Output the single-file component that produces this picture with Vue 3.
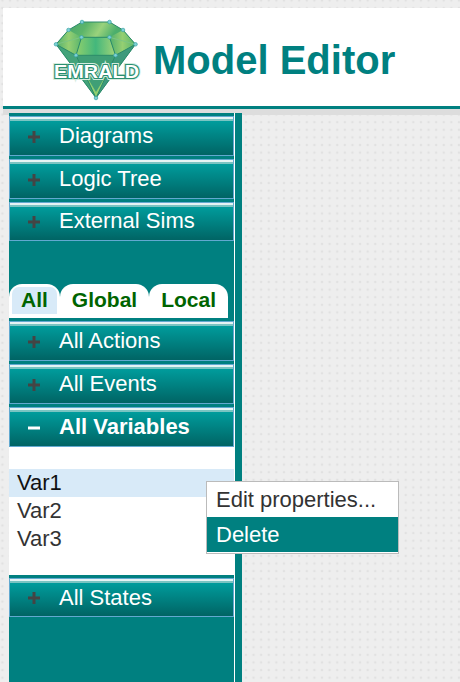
<script setup>
import { ref } from 'vue'

const diagrams = ['Diagrams', 'Logic Tree', 'External Sims']
const tabs = ['All', 'Global', 'Local']
const activeTab = ref('All')
const sections = [
  { label: 'All Actions' },
  { label: 'All Events' },
  { label: 'All Variables', items: ['Var1', 'Var2', 'Var3'] },
  { label: 'All States' },
]
const nodes = [[42, 6], [69.5, 6], [28.5, 14], [83, 14], [16, 28.3], [41.5, 21.3], [69.5, 21.3], [95.5, 28.3], [36, 39.3], [75.5, 39.3], [56, 82]]
</script>

<template>
  <div class="page">
    <header class="header">
      <svg class="logo" viewBox="0 0 110 86" width="110" height="86">
        <defs>
          <linearGradient id="crown" x1="0" x2="1" y1="0" y2="0.6">
            <stop offset="0" stop-color="#3f9f70" />
            <stop offset="0.3" stop-color="#5cb56a" />
            <stop offset="0.45" stop-color="#9ad27c" />
            <stop offset="0.6" stop-color="#4caf6c" />
            <stop offset="1" stop-color="#3c9c6c" />
          </linearGradient>
          <linearGradient id="front" x1="0" x2="1">
            <stop offset="0" stop-color="#8fd06c" />
            <stop offset="0.5" stop-color="#43b77c" />
            <stop offset="1" stop-color="#a2d478" />
          </linearGradient>
          <linearGradient id="side" x1="0" x2="1">
            <stop offset="0" stop-color="#4fae6c" />
            <stop offset="0.5" stop-color="#95cf72" />
            <stop offset="1" stop-color="#58b56c" />
          </linearGradient>
        </defs>
        <path d="M42 6H69.5L83 14L95.5 28.3L56 82L16 28.3L28.5 14Z" fill="url(#crown)" />
        <path d="M16 28.3L36 39.3L56 82Z" fill="#43a37a" />
        <path d="M95.5 28.3L75.5 39.3L56 82Z" fill="#3d9a7c" />
        <path d="M36 39.3H75.5L56 82Z" fill="#3f9f76" />
        <path d="M44 56L56 76L68 56L56 82Z" fill="#8fcf70" />
        <path d="M41.5 21.3H69.5L75.5 39.3H36Z" fill="url(#front)" />
        <path d="M28.5 14L41.5 21.3L36 39.3L16 28.3Z" fill="url(#side)" />
        <path d="M83 14L69.5 21.3L75.5 39.3L95.5 28.3Z" fill="url(#side)" />
        <path class="edges" d="M42 6H69.5L83 14L95.5 28.3L56 82L16 28.3L28.5 14ZM41.5 21.3H69.5M16 28.3L36 39.3H75.5L95.5 28.3M41.5 21.3L36 39.3L56 82L75.5 39.3L69.5 21.3" />
        <path class="edges faint" d="M16 28.3L41.5 21.3M69.5 21.3L95.5 28.3" />
        <circle v-for="(n, i) in nodes" :key="i" :cx="n[0]" :cy="n[1]" r="1.8" fill="#7fd0d6" stroke="#3aa3a3" stroke-width="0.7" />
        <text class="logo-text halo" x="14" y="62" textLength="85" lengthAdjust="spacingAndGlyphs">EMRALD</text>
        <text class="logo-text" x="14" y="62" textLength="85" lengthAdjust="spacingAndGlyphs">EMRALD</text>
      </svg>
      <h1 class="title">Model Editor</h1>
    </header>

    <aside class="sidebar">
      <div v-for="d in diagrams" :key="d" class="bar">
        <svg class="sign" viewBox="0 0 12 12"><path d="M0 6H12M6 0V12" /></svg>
        <span>{{ d }}</span>
      </div>

      <nav class="tabs">
        <button v-for="t in tabs" :key="t" class="tab" :class="{ active: t === activeTab }" @click="activeTab = t">
          <span>{{ t }}</span>
        </button>
      </nav>

      <template v-for="s in sections" :key="s.label">
        <div class="bar" :class="{ open: s.items }">
          <svg class="sign" viewBox="0 0 12 12"><path :d="s.items ? 'M0 6H12' : 'M0 6H12M6 0V12'" /></svg>
          <span>{{ s.label }}</span>
        </div>
        <ul v-if="s.items" class="list">
          <li v-for="(v, i) in s.items" :key="v" :class="{ selected: i === 0 }">{{ v }}</li>
        </ul>
      </template>
    </aside>

    <div class="menu">
      <div class="menu-item">Edit properties...</div>
      <div class="menu-item hover">Delete</div>
    </div>
  </div>
</template>

<style>
body {
  margin: 0;
}
</style>

<style scoped>
.page {
  position: relative;
  box-sizing: border-box;
  height: 682px;
  padding-top: 8px;
  overflow: hidden;
  background-color: #eee;
  background-image: radial-gradient(circle, #e1e1e1 0 0.8px, transparent 1.6px);
  background-size: 7.62px 7.62px;
  background-position: -1.4px -3.4px;
  font-family: "Liberation Sans", Arial, sans-serif;
  font-size: 22px;
}
.header {
  display: flex;
  box-sizing: border-box;
  height: 101px;
  margin-left: 3px;
  padding-left: 37px;
  background: #fff;
  border-bottom: 3px solid #008080;
  box-shadow: 0 6px 0 #ddd;
}
.logo {
  flex: none;
  margin-top: 8px;
}
.edges {
  fill: none;
  stroke: #2a8a6a;
  stroke-width: 1;
}
.edges.faint {
  stroke: #7cc583;
}
.logo-text {
  font-size: 18.5px;
  font-weight: bold;
  fill: #fff;
  stroke: #2a8f70;
  stroke-width: 2.2px;
  paint-order: stroke;
}
.halo {
  stroke: #d3ecdf;
  stroke-width: 4px;
}
.title {
  margin: 0 0 0 3px;
  color: #008080;
  font-size: 40px;
  line-height: 104px;
  white-space: nowrap;
}
.sidebar {
  position: relative;
  box-sizing: border-box;
  width: 233px;
  height: 569px;
  margin: 4px 0 0 9px;
  padding: 3px 8px 0 0;
  background: linear-gradient(to right, #008080 225px, #fff 225px 226px, #008080 226px);
}
.bar {
  display: flex;
  align-items: center;
  box-sizing: border-box;
  width: 225px;
  height: 40px;
  margin-bottom: 3px;
  padding: 0 0 0 18px;
  border: 1px solid #62a9d0;
  background: linear-gradient(#e4f4f4 0 2px, #79c4c2 2px 4px, #009c9c 4px, #006464);
  color: #fff;
}
.bar span {
  margin-left: 19px;
}
.bar:nth-child(3) {
  height: 39px;
  padding-bottom: 1px;
}
.bar:last-child {
  height: 39px;
}
.bar.open {
  margin-bottom: 0;
  font-weight: bold;
}
.sign {
  width: 12px;
  height: 12px;
  margin-top: 1px;
  fill: none;
  stroke: #444;
  stroke-width: 3;
}
.open .sign {
  stroke: #fff;
}
.tabs {
  display: flex;
  height: 34px;
  margin: 43px 0 3px;
}
.tab {
  padding: 3px 3px 4px;
  border: 0;
  border-radius: 13px 13px 0 0;
  background: #fff;
  color: #006400;
  font: bold 21px/25px "Liberation Sans", Arial, sans-serif;
}
.tab span {
  display: block;
  padding: 0 9px 2px;
}
.tab.active span {
  border-radius: 7px 7px 0 0;
  background: #d8eaf8;
}
.list {
  box-sizing: border-box;
  width: 225px;
  height: 128px;
  margin: 0 0 3px;
  padding: 22px 0 0;
  background: #fff;
  list-style: none;
  line-height: 28px;
}
.list li {
  padding-left: 8px;
  color: #333;
}
.list .selected {
  background: #d8eaf8;
  color: #111;
}
.menu {
  position: absolute;
  top: 481px;
  left: 206px;
  box-sizing: border-box;
  width: 193px;
  height: 73px;
  border: 1px solid #bbb;
  background: #fff;
}
.menu-item {
  height: 35px;
  padding-left: 9px;
  color: #333;
  line-height: 35px;
}
.menu-item.hover {
  background: #008080;
  color: #fff;
}
</style>
